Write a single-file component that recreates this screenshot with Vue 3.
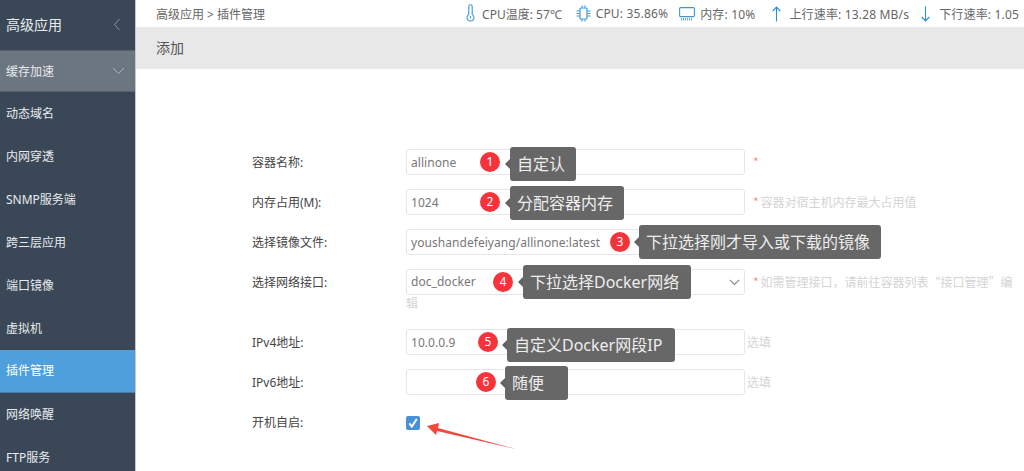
<script setup>
const menu = [
  { label: '缓存加速', cls: 'open' },
  { label: '动态域名' },
  { label: '内网穿透' },
  { label: 'SNMP服务端' },
  { label: '跨三层应用' },
  { label: '端口镜像' },
  { label: '虚拟机' },
  { label: '插件管理', cls: 'active' },
  { label: '网络唤醒' },
  { label: 'FTP服务' }
]

const rows = [
  { label: '容器名称:', value: 'allinone', star: true, help: '', note: { n: 1, text: '自定认', bx: 228, tx: 258, top: -2, w: 66 } },
  { label: '内存占用(M):', value: '1024', star: true, help: '容器对宿主机内存最大占用值', note: { n: 2, text: '分配容器内存', bx: 228, tx: 258, top: -3, w: 114 } },
  { label: '选择镜像文件:', value: 'youshandefeiyang/allinone:latest', star: true, help: '', note: { n: 3, text: '下拉选择刚才导入或下载的镜像', bx: 358, tx: 387, top: -4, w: 242 } },
  { label: '选择网络接口:', value: 'doc_docker', select: true, tall: true, star: true, help: '如需管理接口，请前往容器列表“接口管理”编辑', note: { n: 4, text: '下拉选择Docker网络', bx: 241, tx: 271, top: -4, w: 168 } },
  { label: 'IPv4地址:', value: '10.0.0.9', help: '选填', note: { n: 5, text: '自定义Docker网段IP', bx: 226, tx: 255, top: -1, w: 168 } },
  { label: 'IPv6地址:', value: '', help: '选填', note: { n: 6, text: '随便', bx: 224, tx: 253, top: -3, w: 63 } }
]
</script>

<template>
  <div class="page">
    <aside class="side">
      <div class="side-head">
        <span>高级应用</span>
        <svg class="chev-left" width="8" height="13" viewBox="0 0 8 13"><path d="M6.5 1 1.5 6.5l5 5.500" fill="none" stroke="#8d98a4" stroke-width="1"/></svg>
      </div>
      <div v-for="m in menu" :key="m.label" class="item" :class="m.cls">
        <span>{{ m.label }}</span>
        <svg v-if="m.cls === 'open'" class="chev-down" width="13" height="8" viewBox="0 0 13 8"><path d="M1 1l5.500 5.500L12 1" fill="none" stroke="#aab2ba" stroke-width="1"/></svg>
      </div>
    </aside>

    <main class="main">
      <header class="top">
        <div class="crumb">高级应用 &gt; 插件管理</div>
        <div class="stats">
          <span class="stat s1">
            <svg width="9" height="18" viewBox="0 0 9 18" fill="none" stroke="#3d97d8" stroke-width="1.1"><path d="M2.800 10.500V2.500a1.700 1.700 0 0 1 3.400 0v8a3.500 3.500 0 1 1-3.400 0z"/><path d="M4.500 12v2.500"/></svg>
            CPU温度: 57℃
          </span>
          <span class="stat s2">
            <svg width="15" height="17" viewBox="0 0 15 17" fill="none" stroke="#3d97d8" stroke-width="1.200"><rect x="4" y="3" width="7" height="11" rx="1"/><path d="M6 0.500v2M9 0.500v2M6 14.500v2M9 14.500v2M0.500 6h3M0.500 8.500h3M0.500 11h3M11.500 6h3M11.500 8.500h3M11.500 11h3"/></svg>
            CPU: 35.86%
          </span>
          <span class="stat s3">
            <svg width="16" height="14" viewBox="0 0 16 14" fill="none" stroke="#3d97d8" stroke-width="1.100"><rect x="0.600" y="0.600" width="14.800" height="9" rx="1"/><path d="M2.500 11v2.500M4.500 11v2.500M6.500 11v2.500M8.500 11v2.500M10.500 11v2.500M12.500 11v2.500" stroke-width="0.800"/></svg>
            内存: 10%
          </span>
          <span class="stat s4">
            <svg width="9" height="16" viewBox="0 0 9 16" fill="none" stroke="#2b8fd8" stroke-width="1.100"><path d="M4.500 15.500V1M0.700 5 4.500 1l3.800 4"/></svg>
            上行速率: 13.28 MB/s
          </span>
          <span class="stat s5">
            <svg width="9" height="16" viewBox="0 0 9 16" fill="none" stroke="#2b8fd8" stroke-width="1.100"><path d="M4.500 0.500V15M0.700 11l3.800 4 3.800-4"/></svg>
            下行速率: 1.05
          </span>
        </div>
      </header>

      <div class="title">添加</div>

      <form class="form" @submit.prevent>
        <div v-for="r in rows" :key="r.label" class="row" :class="{ tall: r.tall }">
          <label class="label">{{ r.label }}</label>
          <div class="field">
            <span v-if="r.select" class="select-wrap">
              <select class="ctl"><option>{{ r.value }}</option></select>
              <svg class="sel-chev" width="11" height="7" viewBox="0 0 11 7"><path d="M0.800 0.800 5.500 5.500l4.700-4.700" fill="none" stroke="#888" stroke-width="1.100"/></svg>
            </span>
            <input v-else class="ctl" type="text" :value="r.value" readonly>
            <span class="help" :class="{ plain: !r.star }"><i v-if="r.star" class="star">*</i><span v-if="r.help" :class="{ 'after-star': r.star }">{{ r.help }}</span></span>
          </div>
          <span class="badge" :style="{ left: r.note.bx + 'px' }">{{ r.note.n }}</span>
          <span class="tag" :style="{ left: r.note.tx + 'px', top: r.note.top + 'px', width: r.note.w + 'px' }">{{ r.note.text }}</span>
        </div>
        <div class="row check-row">
          <label class="label">开机自启:</label>
          <span class="check">
            <svg width="14" height="14" viewBox="0 0 14 14"><path d="M3.300 7.300 5.800 10.500 10.800 3" fill="none" stroke="#fff" stroke-width="2"/></svg>
          </span>
        </div>
      </form>

      <svg class="pointer" width="100" height="30" viewBox="0 0 100 30"><path d="M2 7 14 4 13 9 91 30 12 12 11 16z" fill="#f2473c"/></svg>
    </main>
  </div>
</template>

<style>
html, body { margin: 0; overflow: hidden; background: #fff; }
</style>

<style scoped>
.page {
  display: flex;
  width: 1024px;
  height: 471px;
  overflow: hidden;
  font-family: "Noto Sans", "Noto Sans CJK SC", sans-serif;
  font-size: 12px;
  color: #555;
}
.side {
  flex: none;
  width: 135px;
  background: #3a4757;
  border-right: 1px solid #c4c8cc;
  color: #e8ebee;
}
.side-head {
  height: 50px;
  display: flex;
  align-items: center;
  justify-content: space-between;
  padding: 0 14px 2px 6px;
  font-size: 14px;
  box-sizing: border-box;
}
.item {
  height: 43px;
  display: flex;
  align-items: center;
  justify-content: space-between;
  padding: 0 10px 2px 6px;
  box-sizing: border-box;
}
.item.open { height: 42px; padding-bottom: 0; background: #6b7680; border-top: 1px solid #566270; border-bottom: 1px solid #566270; }
.item.active { background: #4e9fdb; color: #fff; border-bottom: 1px solid #3f7fb0; }
.main {
  position: relative;
  flex: 1;
  min-width: 0;
}
.top {
  height: 27px;
  display: flex;
  align-items: center;
  justify-content: space-between;
  padding-left: 20px;
  color: #666;
}
.stats { display: flex; align-items: center; white-space: nowrap; padding-right: 5px; letter-spacing: 0.17px; }
.stat { display: flex; align-items: center; gap: 7px; }
.s1 { letter-spacing: 0; }
.s1 svg { margin-top: -1px; }
.s2 { margin-left: 14px; gap: 5px; }
.s3 { margin-left: 11px; gap: 5px; }
.s4 { margin-left: 17px; gap: 8px; }
.s5 { margin-left: 12px; gap: 9px; }
.title {
  height: 42px;
  line-height: 42px;
  padding-left: 20px;
  background: #e8e8e8;
  font-size: 14px;
  color: #555;
}
.form { padding: 80px 5px 0 116px; }
.row {
  position: relative;
  display: flex;
  height: 26px;
  margin-bottom: 14px;
}
.row.tall { height: 46px; }
.label {
  flex: none;
  width: 154px;
  padding-top: 1px;
  line-height: 26px;
  color: #444;
  white-space: nowrap;
}
.field {
  flex: 1;
  line-height: 16px;
  min-width: 0;
}
.tall .field { padding-top: 3px; }
.ctl {
  width: 339px;
  height: 26px;
  box-sizing: border-box;
  vertical-align: top;
  padding: 0 4px;
  margin: 0;
  border: 1px solid #e6e6e6;
  border-radius: 3px;
  background: #fff;
  font: inherit;
  letter-spacing: 0.05px;
  color: #777;
  outline: none;
  appearance: none;
}
.select-wrap { position: relative; display: inline-block; vertical-align: middle; height: 26px; margin-top: -3px; }
.sel-chev { position: absolute; right: 5px; top: 10px; }
.help { margin-left: 8px; line-height: 26px; color: #d4d4d4; font-family: "Noto Sans CJK SC", sans-serif; }
.help.plain { margin-left: 2px; }
.tall .help { line-height: 16px; }
.after-star { margin-left: 2px; }
.star { color: #f88; font-style: normal; }
.badge {
  position: absolute;
  top: 3px;
  width: 20px;
  height: 20px;
  border-radius: 50%;
  background: #f5333b;
  color: #fff;
  text-align: center;
  line-height: 20px;
  font-size: 12px;
}
.tag {
  position: absolute;
  height: 34px;
  line-height: 34px;
  box-sizing: border-box;
  padding-left: 7px;
  background: rgba(98, 98, 98, 0.97);
  border-radius: 3px;
  color: #eee;
  font-size: 16px;
  white-space: nowrap;
}
.tag::before {
  content: "";
  position: absolute;
  left: -5px;
  top: 12px;
  border: 5px solid transparent;
  border-left: 0;
  border-right-color: #626262;
}
.check-row { align-items: flex-start; margin: 0; }
.check {
  width: 14px;
  height: 14px;
  margin-top: 7px;
  border-radius: 2px;
  background: #4a90d9;
  display: block;
}
.check svg { display: block; }
.pointer { position: absolute; left: 289px; top: 419px; }
</style>
